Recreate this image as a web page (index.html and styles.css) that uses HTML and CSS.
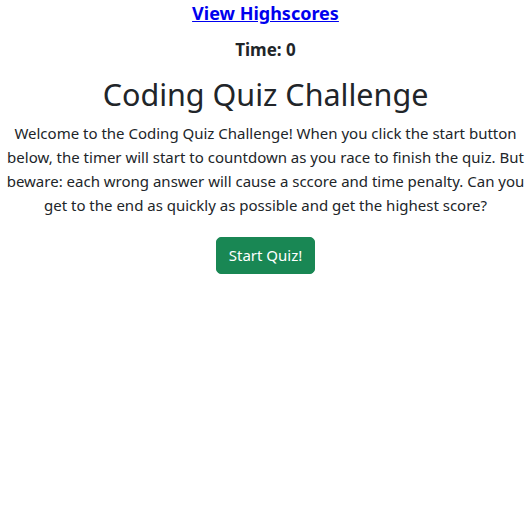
FILE: index.html
```html
<!DOCTYPE html>
<html lang="en">
<head>
<meta charset="utf-8">
<title>Coding Quiz Challenge</title>
<link rel="stylesheet" href="styles.css">
</head>
<body>
<header class="top">
  <a class="scores" href="#">View Highscores</a>
  <div class="timer">Time: <span>0</span></div>
</header>
<main class="intro">
  <h1 class="title">Coding Quiz Challenge</h1>
  <p class="desc">Welcome to the Coding Quiz Challenge! When you click the start button below, the timer will start to countdown as you race to finish the quiz. But beware: each wrong answer will cause a sccore and time penalty. Can you get to the end as quickly as possible and get the highest score?</p>
  <button class="start" type="button">Start Quiz!</button>
</main>
</body>
</html>
```

FILE: styles.css
```css
html, body {
  margin: 0;
  padding: 0;
  background: #fff;
}
body {
  font-family: "Noto Sans", "Open Sans", sans-serif;
  font-size: 15px;
  line-height: 24px;
  color: #212529;
  text-align: center;
}
.top {
  display: flex;
  flex-direction: column;
  align-items: center;
  padding-top: 1px;
}
.scores {
  font-size: 18px;
  font-weight: 700;
  color: #0000ee;
  text-decoration: underline;
  line-height: 24px;
}
.timer {
  margin-top: 13px;
  font-size: 17px;
  font-weight: 700;
  line-height: 24px;
}
.intro {
  display: flex;
  flex-direction: column;
  align-items: center;
  padding: 0 6px;
}
.title {
  margin: 14px 0 0;
  font-size: 30.5px;
  font-weight: 400;
  line-height: 36px;
}
.desc {
  margin: 9px 0 0;
}
.start {
  margin-top: 20px;
  font-family: inherit;
  font-size: 15px;
  line-height: 23px;
  color: #fff;
  background: #198754;
  border: 1px solid #198754;
  border-radius: 5px;
  padding: 6px 12px;
}
```
